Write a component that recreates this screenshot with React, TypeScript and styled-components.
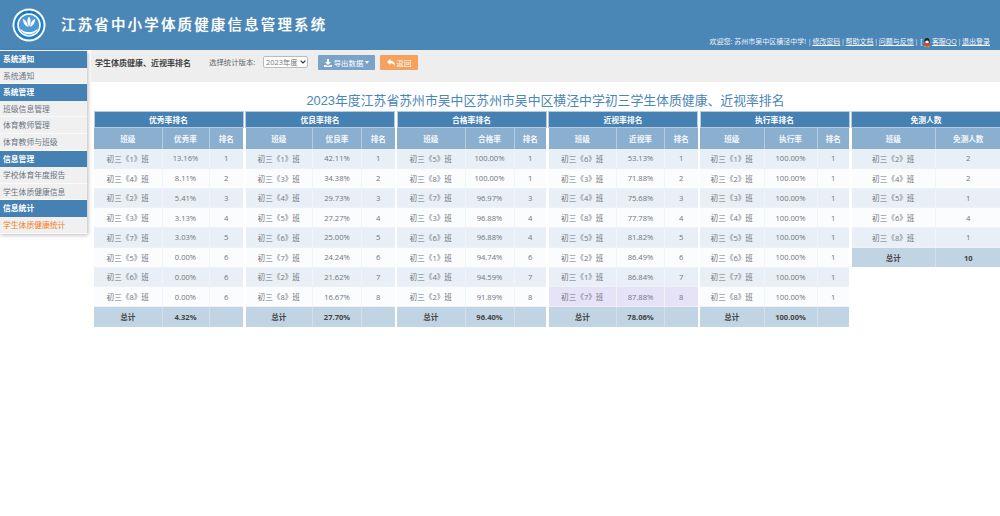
import React from "react";
import styled, { createGlobalStyle } from "styled-components";

const Global = createGlobalStyle`
  html, body { margin: 0; padding: 0; background: #fff; }
  body { font-family: "Open Sans", "Noto Sans CJK SC", sans-serif; font-size: 8px; color: #777; }
  * { box-sizing: border-box; }
`;

const Page = styled.div`
  width: 1000px;
  height: 516px;
  overflow: hidden;
  display: flex;
  flex-direction: column;
`;
const Header = styled.header`
  height: 50px;
  flex: none;
  background: #4a86b6;
  display: flex;
  padding-left: 12px;
`;
const Logo = styled.svg`
  width: 34px;
  height: 34px;
  margin-top: 8px;
  flex: none;
`;
const SiteTitle = styled.h1`
  margin: 16px 0 0 15px;
  font-size: 14.5px;
  line-height: 18px;
  font-weight: 500;
  letter-spacing: 2.15px;
  color: #fff;
  white-space: nowrap;
  text-shadow: 0 0 1px rgba(255,255,255,.6);
`;
const UserBar = styled.div`
  margin-left: auto;
  align-self: flex-end;
  padding: 0 10px 3px 0;
  display: flex;
  align-items: center;
  gap: 0.7px;
  font-size: 7px;
  line-height: 10px;
  color: #eef4fa;
  white-space: nowrap;
`;
const TopLink = styled.a`
  color: #f2f6fb;
  text-decoration: underline;
`;
const Body = styled.div`
  flex: 1;
  display: flex;
  align-items: flex-start;
`;
const Side = styled.nav`
  width: 87px;
  flex: none;
  margin-top: 1px;
  background: #f0f0f0;
  box-shadow: 1px 1px 4px rgba(0,0,0,.28);
`;
const SideHead = styled.div`
  height: 16.6px;
  line-height: 16px;
  background: #4581b3;
  color: #fff;
  font-weight: 700;
  font-size: 7.8px;
  padding-left: 3px;
`;
const SideItem = styled.div<{ $active?: boolean }>`
  height: 16.6px;
  line-height: 16px;
  padding-left: 3px;
  font-size: 7.8px;
  color: ${(p) => (p.$active ? "#f07f1f" : "#6b7582")};
  border-bottom: 1px solid #fafafa;
`;
const Main = styled.main`
  flex: 1;
  min-width: 0;
  padding-left: 4px;
`;
const Toolbar = styled.div`
  height: 32px;
  background: #eeeeee;
  display: flex;
  align-items: flex-start;
  padding: 6px 0 0 4px;
`;
const ToolTitle = styled.div`
  font-size: 8px;
  line-height: 13px;
  font-weight: 700;
  color: #444;
  width: 114px;
  flex: none;
`;
const ToolLabel = styled.span`
  font-size: 7.4px;
  line-height: 13px;
  color: #666;
  width: 54px;
  flex: none;
`;
const YearSelect = styled.div`
  width: 45px;
  height: 12px;
  border: 1px solid #bbb;
  border-radius: 2px;
  background: #fff;
  color: #777;
  font-size: 7.4px;
  line-height: 10px;
  padding-left: 2px;
  display: flex;
  align-items: center;
  justify-content: space-between;
  margin-right: 10px;
  svg { margin-right: 1px; }
`;
const ToolButton = styled.button<{ $color: string; $w: number }>`
  width: ${(p) => p.$w}px;
  height: 15px;
  margin: -1px 5px 0 0;
  padding: 0;
  border: 0;
  border-radius: 1px;
  background: ${(p) => p.$color};
  color: #fff;
  font: inherit;
  font-size: 7.4px;
  display: flex;
  align-items: center;
  justify-content: center;
  gap: 2px;
`;
const Heading = styled.h2`
  margin: 9px 0 0;
  height: 20px;
  font-family: "Liberation Sans", "Noto Sans CJK SC", sans-serif;
  font-size: 12.85px;
  line-height: 19px;
  font-weight: 400;
  text-align: center;
  color: #4a86b6;
`;
const Tables = styled.div`
  display: grid;
  grid-template-columns: repeat(6, 149px);
  justify-content: space-between;
  align-items: start;
  padding-left: 2.5px;
`;
const Rank = styled.table`
  width: 149px;
  table-layout: fixed;
  border-collapse: collapse;
  font-size: 7.6px;
  text-align: center;
`;
const Cap = styled.th`
  height: 16px;
  padding: 0;
  background: #4581b3;
  border: 1px solid #b7cbdd;
  color: #fff;
  font-weight: 700;
  font-size: 7.8px;
`;
const HeadCell = styled.th`
  height: 21px;
  padding: 0;
  background: #8bafcf;
  color: #f4f8fb;
  font-weight: 600;
  border-right: 1px solid #b4cade;
  &:last-child { border-right: 0; }
`;
const Row = styled.tr<{ $odd: boolean; $mark?: boolean }>`
  height: 19.75px;
  background: ${(p) => (p.$mark ? "#e6e3f8" : p.$odd ? "#e8eff6" : "#fbfcfe")};
`;
const Cell = styled.td`
  padding: 0;
  color: #71767c;
  border-right: 1px solid #f1f4f8;
  border-bottom: 1px solid #eef1f5;
  &:last-child { border-right: 0; }
`;
const TotalCell = styled.td`
  height: 20px;
  padding: 0;
  background: #c1d4e4;
  color: #444;
  font-weight: 700;
  border-right: 1px solid #d3e0eb;
  &:last-child { border-right: 0; }
`;

type T = { title: string; col: string; widths: number[]; rows: [number, string, number?][]; total: string; mark?: number };

const tables: T[] = [
  { title: "优秀率排名", col: "优秀率", widths: [68, 47, 34], total: "4.32%",
    rows: [[1,"13.16%",1],[4,"8.11%",2],[2,"5.41%",3],[3,"3.13%",4],[7,"3.03%",5],[5,"0.00%",6],[6,"0.00%",6],[8,"0.00%",6]] },
  { title: "优良率排名", col: "优良率", widths: [67, 49, 33], total: "27.70%",
    rows: [[1,"42.11%",1],[3,"34.38%",2],[4,"29.73%",3],[5,"27.27%",4],[6,"25.00%",5],[7,"24.24%",6],[2,"21.62%",7],[8,"16.67%",8]] },
  { title: "合格率排名", col: "合格率", widths: [68, 49, 32], total: "96.40%",
    rows: [[5,"100.00%",1],[8,"100.00%",1],[7,"96.97%",3],[3,"96.88%",4],[6,"96.88%",4],[1,"94.74%",6],[4,"94.59%",7],[2,"91.89%",8]] },
  { title: "近视率排名", col: "近视率", widths: [68, 48, 33], total: "78.06%", mark: 7,
    rows: [[6,"53.13%",1],[3,"71.88%",2],[4,"75.68%",3],[8,"77.78%",4],[5,"81.82%",5],[2,"86.49%",6],[1,"86.84%",7],[7,"87.88%",8]] },
  { title: "执行率排名", col: "执行率", widths: [64, 53, 32], total: "100.00%",
    rows: [[1,"100.00%",1],[2,"100.00%",1],[3,"100.00%",1],[4,"100.00%",1],[5,"100.00%",1],[6,"100.00%",1],[7,"100.00%",1],[8,"100.00%",1]] },
  { title: "免测人数", col: "免测人数", widths: [84, 65], total: "10",
    rows: [[2,"2"],[4,"2"],[5,"1"],[6,"4"],[8,"1"]] },
];

function RankTable({ t }: { t: T }) {
  const n = t.widths.length;
  return (
    <Rank>
      <colgroup>{t.widths.map((w, i) => <col key={i} width={w} />)}</colgroup>
      <thead>
        <tr><Cap colSpan={n}>{t.title}</Cap></tr>
        <tr>
          <HeadCell>班级</HeadCell>
          <HeadCell>{t.col}</HeadCell>
          {n === 3 && <HeadCell>排名</HeadCell>}
        </tr>
      </thead>
      <tbody>
        {t.rows.map((r, i) => (
          <Row key={i} $odd={i % 2 === 0} $mark={t.mark === r[0]}>
            <Cell>初三《{r[0]}》班</Cell>
            <Cell>{r[1]}</Cell>
            {n === 3 && <Cell>{r[2]}</Cell>}
          </Row>
        ))}
        <tr>
          <TotalCell>总计</TotalCell>
          <TotalCell>{t.total}</TotalCell>
          {n === 3 && <TotalCell />}
        </tr>
      </tbody>
    </Rank>
  );
}

export default function App() {
  return (
    <Page>
      <Global />
      <Header>
        <Logo viewBox="0 0 34 34">
          <circle cx="17" cy="17" r="16.5" fill="#fff" />
          <circle cx="17" cy="17" r="14.6" fill="#1f7fc8" />
          <circle cx="17" cy="17" r="11.8" fill="#fff" />
          <circle cx="17" cy="17" r="10.2" fill="#4a9ad8" />
          <path d="M17 8.5c2.2 2.6 2.2 6.5 0 10.5-2.2-4-2.2-7.9 0-10.5z" fill="#fff" />
          <path d="M11 11c2.8 1 4.4 3.6 5 8-3.3-1.2-5.1-4-5-8zM23 11c-2.8 1-4.4 3.6-5 8 3.3-1.2 5.1-4 5-8z" fill="#fff" />
          <path d="M8 20.5c3 2.8 6 3.8 9 3.8s6-1 9-3.8c-1.4 3.9-4.8 5.7-9 5.7s-7.6-1.8-9-5.7z" fill="#fff" />
          <circle cx="12" cy="4.8" r=".8" fill="#0f4f82" />
          <circle cx="17" cy="3.8" r=".8" fill="#0f4f82" />
          <circle cx="22" cy="4.8" r=".8" fill="#0f4f82" />
        </Logo>
        <SiteTitle>江苏省中小学体质健康信息管理系统</SiteTitle>
        <UserBar>
          <span>欢迎您: 苏州市吴中区横泾中学! |</span>
          <TopLink>修改密码</TopLink>
          <span>|</span>
          <TopLink>帮助文档</TopLink>
          <span>|</span>
          <TopLink>问题与反馈</TopLink>
          <span>| [</span>
          <svg width="8" height="9" viewBox="0 0 8 9">
            <ellipse cx="4" cy="3" rx="2.6" ry="3" fill="#222" />
            <ellipse cx="4" cy="4" rx="1.8" ry="1.6" fill="#fff" />
            <path d="M1.2 5.2h5.6L7.4 8H.6z" fill="#e8402a" />
            <path d="M1.4 8.2h2v.8h-2zM4.6 8.2h2v.8h-2z" fill="#f5b21a" />
          </svg>
          <TopLink>客服QQ</TopLink>
          <span>|</span>
          <TopLink>退出登录</TopLink>
        </UserBar>
      </Header>
      <Body>
        <Side>
          <SideHead>系统通知</SideHead>
          <SideItem>系统通知</SideItem>
          <SideHead>系统管理</SideHead>
          <SideItem>班级信息管理</SideItem>
          <SideItem>体育教师管理</SideItem>
          <SideItem>体育教师与班级</SideItem>
          <SideHead>信息管理</SideHead>
          <SideItem>学校体育年度报告</SideItem>
          <SideItem>学生体质健康信息</SideItem>
          <SideHead>信息统计</SideHead>
          <SideItem $active>学生体质健康统计</SideItem>
        </Side>
        <Main>
          <Toolbar>
            <ToolTitle>学生体质健康、近视率排名</ToolTitle>
            <ToolLabel>选择统计版本:</ToolLabel>
            <YearSelect>
              2023年度
              <svg width="6" height="4" viewBox="0 0 6 4"><path d="M.6.6 3 3l2.4-2.4" fill="none" stroke="#333" strokeWidth="1.2" /></svg>
            </YearSelect>
            <ToolButton $color="#7ba3c8" $w={57}>
              <svg width="8" height="8" viewBox="0 0 8 8"><path d="M3 0h2v3h2L4 6 1 3h2zM0 6h2l2 1 2-1h2v2H0z" fill="#fff" /></svg>
              导出数据
              <svg width="4" height="3" viewBox="0 0 4 3"><path d="M0 0h4L2 3z" fill="#fff" /></svg>
            </ToolButton>
            <ToolButton $color="#f4a25e" $w={38}>
              <svg width="8" height="7" viewBox="0 0 8 7"><path d="M3.4 0v1.8C6.2 1.8 8 3.4 8 7 7 5 5.6 4.2 3.4 4.2V6L0 3z" fill="#fff" /></svg>
              返回
            </ToolButton>
          </Toolbar>
          <Heading>2023年度江苏省苏州市吴中区苏州市吴中区横泾中学初三学生体质健康、近视率排名</Heading>
          <Tables>
            {tables.map((t) => <RankTable key={t.title} t={t} />)}
          </Tables>
        </Main>
      </Body>
    </Page>
  );
}
